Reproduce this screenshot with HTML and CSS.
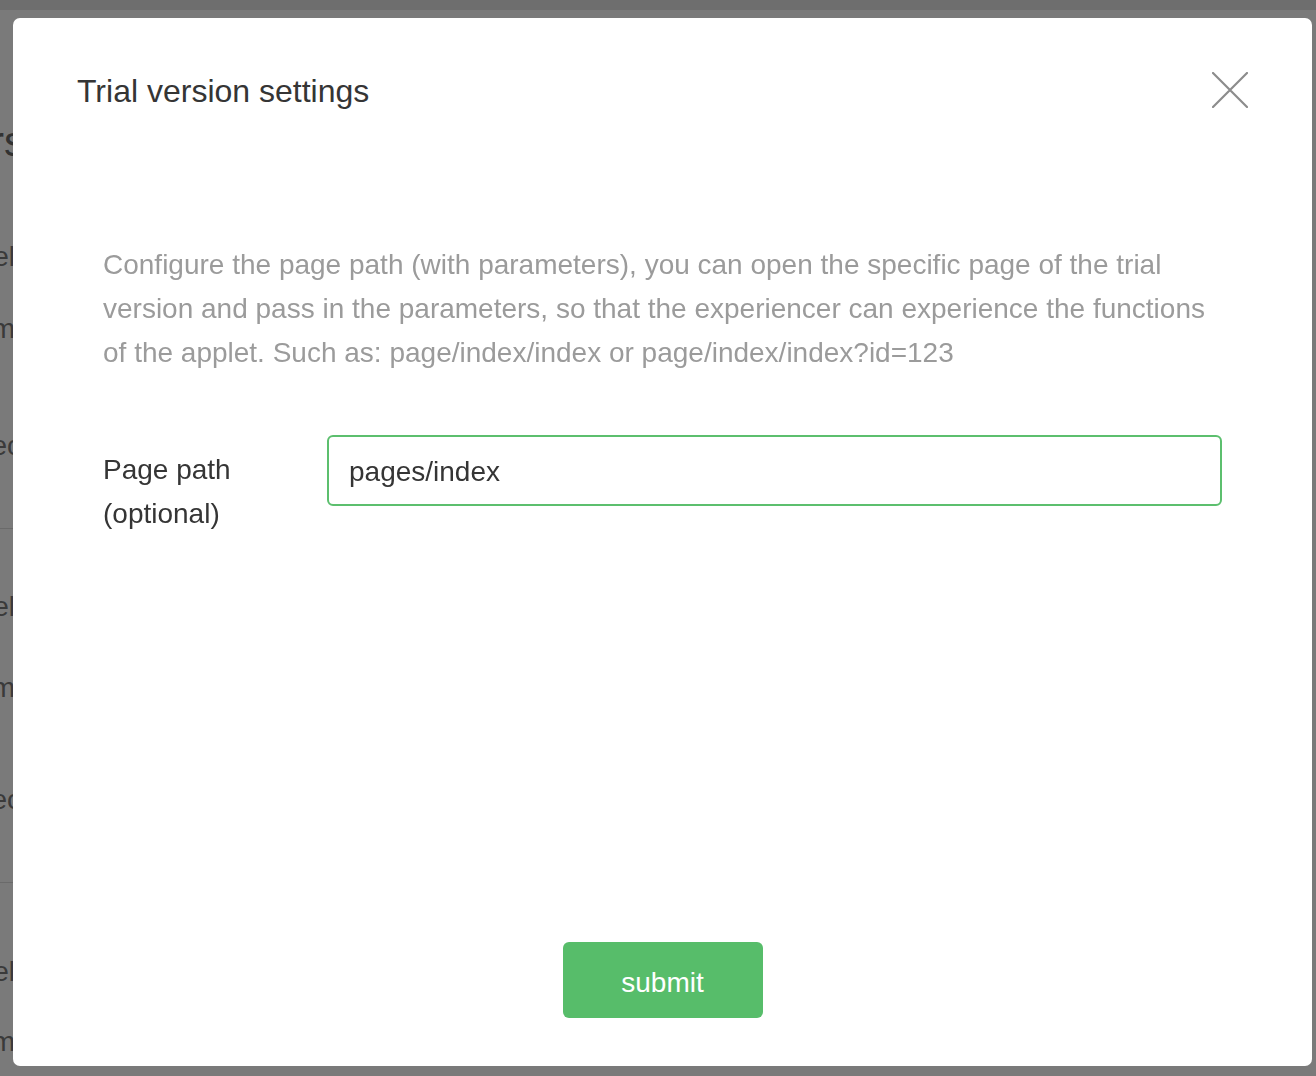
FILE: index.html
```html
<!DOCTYPE html>
<html lang="en">
<head>
<meta charset="utf-8">
<title>Trial version settings</title>
<link rel="stylesheet" href="styles.css">
</head>
<body>
<div class="page">
  <div class="topbar"></div>
  <div class="side">
    <div class="side-heading">Members</div>
    <div class="side-section">
      <div class="side-item first">Model</div>
      <div class="side-item second">Item</div>
      <div class="side-item third">Spec</div>
      <div class="side-line"></div>
    </div>
    <div class="side-section">
      <div class="side-item first">Model</div>
      <div class="side-item second">Item</div>
      <div class="side-item third">Spec</div>
      <div class="side-line"></div>
    </div>
    <div class="side-section">
      <div class="side-item first">Model</div>
      <div class="side-item second">Item</div>
    </div>
  </div>
</div>
<div class="overlay">
  <div class="modal">
    <div class="modal-header">
      <div class="modal-title">Trial version settings</div>
      <button class="close" type="button" aria-label="Close">
        <svg width="36" height="36" viewBox="0 0 36 36"><path d="M1 1 L35 35 M35 1 L1 35" stroke="#8c8c8c" stroke-width="2.2" fill="none" stroke-linecap="round"/></svg>
      </button>
    </div>
    <div class="modal-body">
      <p class="desc">Configure the page path (with parameters), you can open the specific page of the trial version and pass in the parameters, so that the experiencer can experience the functions of the applet. Such as: page/index/index or page/index/index?id=123</p>
      <div class="form-row">
        <label class="form-label" for="path">Page path (optional)</label>
        <input class="form-input" id="path" type="text" value="pages/index">
      </div>
    </div>
    <div class="modal-footer">
      <button class="submit" type="button">submit</button>
    </div>
  </div>
</div>
</body>
</html>
```

FILE: styles.css
```css
html, body {
  margin: 0;
  padding: 0;
  height: 100%;
  overflow: hidden;
}
body {
  font-family: "Liberation Sans", Arial, sans-serif;
  background: #fff;
}
.page {
  height: 1076px;
  background: #fff;
}
.topbar {
  height: 10px;
  background: #e6e6e6;
}
.side {
  width: 15px;
  display: flex;
  flex-direction: column;
  align-items: flex-end;
  color: #7a7a7a;
}
.side-heading {
  font-size: 42px;
  line-height: 50px;
  margin-top: 107px;
  margin-right: -10px;
  white-space: nowrap;
  color: #6a6a6a;
}
.side-section {
  display: flex;
  flex-direction: column;
  align-items: flex-end;
  width: 15px;
}
.side-item {
  font-size: 28px;
  line-height: 40px;
  white-space: nowrap;
}
.side-item.third { margin-right: -6px; }
.side-section:nth-child(2) .side-item.first { margin-top: 70px; }
.side-section:nth-child(2) .side-item.second { margin-top: 32px; }
.side-section:nth-child(2) .side-item.third { margin-top: 77px; }
.side-section:nth-child(3) .side-item.first { margin-top: 58px; }
.side-section:nth-child(3) .side-item.second { margin-top: 41px; }
.side-section:nth-child(3) .side-item.third { margin-top: 72px; }
.side-section:nth-child(4) .side-item.first { margin-top: 69px; }
.side-section:nth-child(4) .side-item.second { margin-top: 30px; }
.side-line {
  width: 200px;
  height: 1px;
  background: #ddd;
  margin-top: 62px;
  align-self: flex-end;
}

.overlay {
  position: fixed;
  inset: 0;
  background: rgba(0, 0, 0, 0.52);
}
.modal {
  margin: 18px 0 0 13px;
  width: 1299px;
  height: 1048px;
  background: #fff;
  border-radius: 7px;
  display: flex;
  flex-direction: column;
  box-sizing: border-box;
}
.modal-header {
  display: flex;
  align-items: center;
  justify-content: space-between;
  padding: 53px 64px 0 64px;
  height: 40px;
  box-sizing: content-box;
}
.modal-title {
  font-size: 32px;
  line-height: 40px;
  color: #353535;
}
.close {
  border: 0;
  background: none;
  padding: 0;
  width: 36px;
  height: 36px;
  display: flex;
  cursor: pointer;
  margin-top: -2px;
}
.modal-body {
  padding: 0 90px;
}
.desc {
  margin: 132px 0 0 0;
  font-size: 28px;
  line-height: 44px;
  color: #9b9b9b;
}
.form-row {
  display: flex;
  align-items: flex-start;
  margin-top: 60px;
}
.form-label {
  width: 224px;
  flex: none;
  padding-right: 24px;
  box-sizing: border-box;
  font-size: 28px;
  line-height: 44px;
  margin-top: 13px;
  color: #353535;
}
.form-input {
  width: 895px;
  height: 71px;
  box-sizing: border-box;
  border: 2px solid #5cbf6e;
  border-radius: 6px;
  padding: 2px 20px 0 20px;
  font-family: "Liberation Sans", Arial, sans-serif;
  font-size: 28px;
  color: #353535;
  outline: none;
  background: #fff;
}
.modal-footer {
  margin-top: auto;
  display: flex;
  justify-content: center;
  padding-bottom: 48px;
}
.submit {
  width: 200px;
  height: 76px;
  border: 0;
  border-radius: 6px;
  background: #57bd6a;
  color: #fff;
  font-family: "Liberation Sans", Arial, sans-serif;
  font-size: 28px;
  padding: 5px 0 0 0;
  cursor: pointer;
}
```
